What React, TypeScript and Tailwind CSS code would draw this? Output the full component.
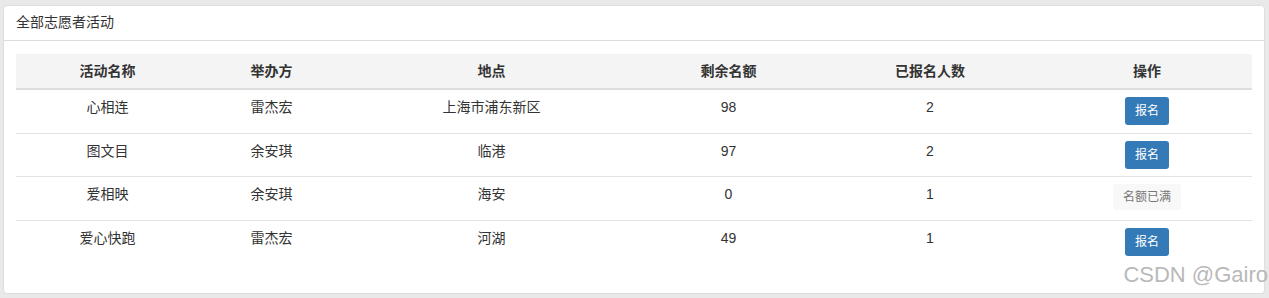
import React from 'react'

type Activity = {
  name: string
  host: string
  place: string
  left: number
  joined: number
}

const activities: Activity[] = [
  { name: '心相连', host: '雷杰宏', place: '上海市浦东新区', left: 98, joined: 2 },
  { name: '图文目', host: '余安琪', place: '临港', left: 97, joined: 2 },
  { name: '爱相映', host: '余安琪', place: '海安', left: 0, joined: 1 },
  { name: '爱心快跑', host: '雷杰宏', place: '河湖', left: 49, joined: 1 },
]

const cols = 'grid grid-cols-[183px_145px_295px_179px_224px_210px]'
const rowHeights = ['h-[43px]', 'h-[43px] border-t', 'h-[44px] border-t', 'h-[43px] border-t']

const App: React.FC = () => {
  return (
    <div
      className="relative min-h-[298px] bg-[#e9e9e9] pt-[5px] pl-[3px] pr-[4px] text-[14px] text-[#333]"
      style={{ fontFamily: '"Liberation Sans", "Noto Sans CJK SC", sans-serif' }}
    >
      <div className="h-[289px] rounded-[4px] border border-[#dedede] bg-white">
        {/* heading */}
        <div className="flex h-[35px] items-center border-b border-[#dcdcdc] px-[12px] pb-px">
          <span>全部志愿者活动</span>
        </div>

        {/* body */}
        <div className="px-[12px] pt-[13px]">
          <div className={`${cols} h-[36px] border-b-2 border-[#dddddd] bg-[#f4f4f4] font-bold`}>
            <div className="flex items-center justify-center">活动名称</div>
            <div className="flex items-center justify-center">举办方</div>
            <div className="flex items-center justify-center">地点</div>
            <div className="flex items-center justify-center">剩余名额</div>
            <div className="flex items-center justify-center">已报名人数</div>
            <div className="flex items-center justify-center">操作</div>
          </div>

          {activities.map((a, i) => (
            <div key={a.name} className={`${cols} ${rowHeights[i]} border-[#e3e3e3] leading-[20px]`}>
              <div className="pt-[7px] text-center">{a.name}</div>
              <div className="pt-[7px] text-center">{a.host}</div>
              <div className="pt-[7px] text-center">{a.place}</div>
              <div className="pt-[7px] text-center">{a.left}</div>
              <div className="pt-[7px] text-center">{a.joined}</div>
              <div className="flex justify-center pt-[7px]">
                {a.left > 0 ? (
                  <button className="h-[28px] rounded-[3px] bg-[#337ab7] px-[10px] text-[12px] leading-[28px] text-white">
                    报名
                  </button>
                ) : (
                  <span className="h-[26px] rounded-[3px] bg-[#f8f8f8] px-[10px] text-[12px] leading-[26px] text-[#777]">
                    名额已满
                  </span>
                )}
              </div>
            </div>
          ))}
        </div>
      </div>

      <span className="absolute right-[1px] top-[262px] text-[22px] leading-[26px] text-[#b9b9b9]">
        CSDN @Gairo
      </span>
    </div>
  )
}

export default App
